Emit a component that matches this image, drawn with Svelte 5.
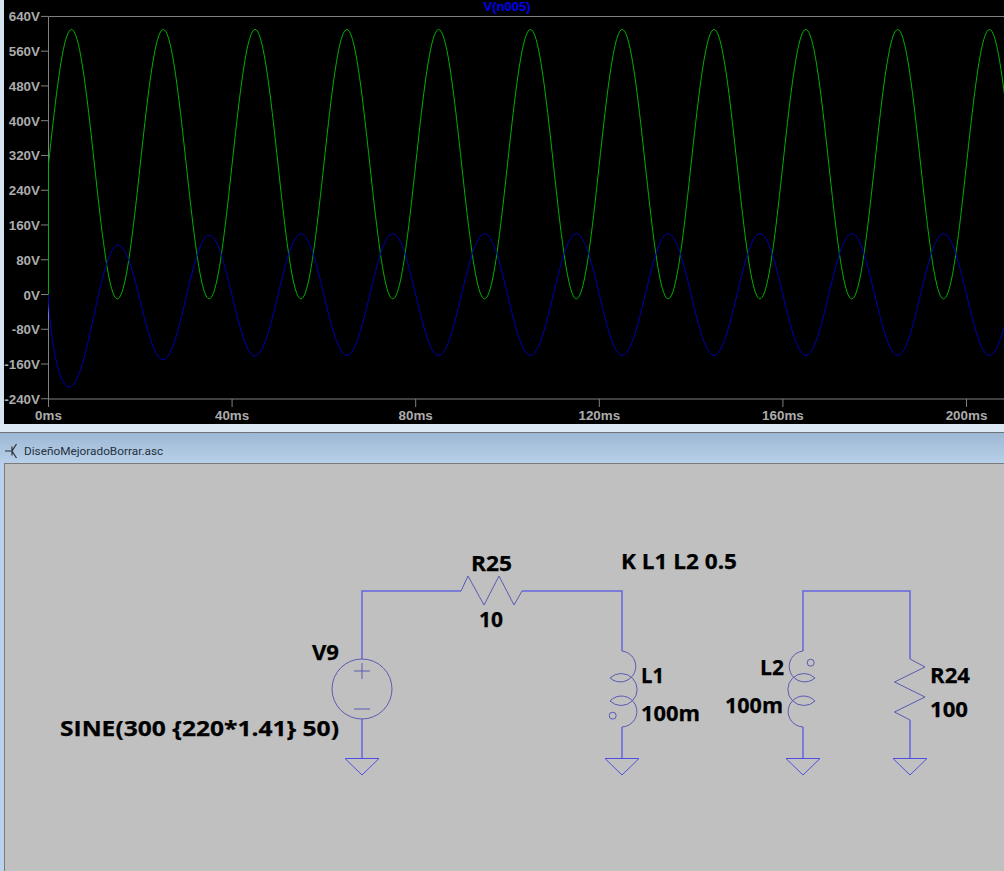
<script lang="ts">
	const xOf = (ms: number) => 48.5 + ms * 4.59;
	const yOf = (v: number) => 294.5 - v * 0.4345;

	const yTicks = [640, 560, 480, 400, 320, 240, 160, 80, 0, -80, -160, -240];
	const xTicks = [0, 40, 80, 120, 160, 200];

	const w = 2 * Math.PI * 0.05; // 50 Hz, t in ms

	function trace(fn: (t: number) => number, start: number) {
		const pts = [`${xOf(0)},${yOf(start)}`];
		for (let t = 0; t <= 210; t += 0.25) {
			pts.push(`${xOf(t).toFixed(2)},${yOf(fn(t)).toFixed(2)}`);
		}
		return pts.join(' ');
	}

	const green = trace((t) => 300 + 310 * Math.sin(w * t), 0);
	const blue = trace(
		(t) => -140 * Math.sin(w * t) - 119 * Math.exp(-t / 10) + 100 * Math.exp(-t),
		0
	);

	const grounds = [362, 622, 803, 910];

	// netlist labels: x, baseline, rendered width
	const labels = [
		{ text: 'R25', x: 471, y: 571, len: 41 },
		{ text: '10', x: 479, y: 627, len: 24 },
		{ text: 'K L1 L2 0.5', x: 621, y: 569, len: 116 },
		{ text: 'V9', x: 312, y: 660, len: 27 },
		{ text: 'SINE(300 {220*1.41} 50)', x: 60, y: 736, len: 279 },
		{ text: 'L1', x: 641, y: 683, len: 23 },
		{ text: '100m', x: 641, y: 721, len: 59 },
		{ text: 'L2', x: 760, y: 675, len: 24 },
		{ text: '100m', x: 725, y: 713, len: 58 },
		{ text: 'R24', x: 930, y: 683, len: 40 },
		{ text: '100', x: 930, y: 717, len: 38 }
	];
</script>

<div class="window">
	<div class="plot-pane">
		<svg class="plot" viewBox="4 0 1000 424" width="1000" height="424">
			<text class="trace-name" x="507" y="11">V(n005)</text>
			<path class="axis" d="M48.5 399V16.5H1004M48.5 399H1004" />
			{#each yTicks as v}
				<path class="axis" d="M41 {yOf(v)}H48.5" />
				<text class="y-label" x="40" y={yOf(v) + 5}>{v}V</text>
			{/each}
			{#each xTicks as ms}
				<path class="axis" d="M{xOf(ms)} 399V407" />
				<text class="x-label" x={xOf(ms)} y="420">{ms}ms</text>
			{/each}
			<polyline class="trace green" points={green} />
			<polyline class="trace blue" points={blue} />
		</svg>
	</div>

	<div class="doc">
		<div class="gap"></div>

		<div class="title-bar">
			<svg class="app-icon" viewBox="0 0 14 16" width="14" height="16">
				<path d="M0 8H7M7 3.5V12.5M7 8L11.5 1M7 8L11.5 15" />
			</svg>
			<span>DiseñoMejoradoBorrar.asc</span>
		</div>

		<div class="sheet-pane">
			<svg class="sheet" viewBox="5 464 999 407" width="999" height="407">
				<path class="wire" d="M362 659V591H461M522 591H622V651M622 727V758M362 719V758" />
				<path class="wire" d="M803 651V591H910V659M910 720V758M803 727V758" />

				<!-- V9 -->
				<circle class="part" cx="362" cy="689" r="30" />
				<path class="part" d="M354 671H370M362 663V679M354 709H370" />

				<!-- R25, R24 -->
				<path class="part" d="M461 591L468 576L484 605L499 576L514 605L522 591" />
				<path class="part" d="M910 659L925 667L894.5 682L925 697L894.5 712L910 720" />

				<!-- L1, L2 -->
				<path class="part" d="M622 651A15.5 15.5 0 1 1 610 678A16 16 0 1 1 610 701A15.5 15.5 0 1 1 622 727" />
				<path class="part" d="M803 651A15.5 15.5 0 1 0 815 678A16 16 0 1 0 815 701A15.5 15.5 0 1 0 803 727" />
				<circle class="part" cx="612.7" cy="715.7" r="3.5" />
				<circle class="part" cx="810.7" cy="662.7" r="3.5" />

				{#each grounds as x}
					<path class="gnd" d="M{x - 17} 758.5H{x + 17}L{x} 775Z" />
				{/each}

				{#each labels as l}
					<text class="label" x={l.x} y={l.y} textLength={l.len} lengthAdjust="spacingAndGlyphs">{l.text}</text>
				{/each}
			</svg>
		</div>
	</div>
</div>

<style>
	:global(body) {
		margin: 0;
		background: #d6e4f2;
	}

	.window {
		width: 1004px;
		height: 871px;
		display: flex;
		flex-direction: column;
		overflow: hidden;
		font-family: 'Liberation Sans', Arial, sans-serif;
	}

	.plot-pane {
		height: 424px;
		margin-left: 4px;
		background: #000;
	}

	svg {
		display: block;
	}

	.doc {
		flex: 1;
		display: flex;
		flex-direction: column;
		background: #b9d2ec;
	}

	.gap {
		height: 8px;
		background: #dce8f4;
		border-bottom: 1px solid #6f7377;
	}

	.title-bar {
		height: 30px;
		box-sizing: border-box;
		padding: 6px 0 0 5px;
		display: flex;
		align-items: center;
		gap: 5px;
		background: linear-gradient(#9db8d4, #b8d0e9);
		color: #26323f;
		font: 11.8px Roboto, sans-serif;
	}

	.app-icon {
		fill: none;
		stroke: #2a2f36;
		stroke-width: 1.2;
	}

	.sheet-pane {
		flex: 1;
		margin-left: 4px;
		border-top: 1px solid #7b7b7b;
		border-left: 1px solid #7b7b7b;
		background: #c0c0c0;
	}

	.trace-name {
		fill: #0000f0;
		font-size: 13px;
		font-weight: 700;
		text-anchor: middle;
	}

	.axis {
		fill: none;
		stroke: #808080;
		stroke-width: 1;
	}

	.y-label,
	.x-label {
		fill: #acacac;
		font-size: 13.4px;
		font-weight: 700;
	}

	.y-label {
		text-anchor: end;
	}

	.x-label {
		text-anchor: middle;
	}

	.trace {
		fill: none;
		stroke-width: 1;
	}

	.green {
		stroke: #00b000;
	}

	.blue {
		stroke: #0000b4;
	}

	.wire {
		fill: none;
		stroke: #6464e0;
		stroke-width: 1.5;
	}

	.part {
		fill: none;
		stroke: #5a5ab4;
		stroke-width: 1;
	}

	.gnd {
		fill: none;
		stroke: #5050e0;
		stroke-width: 1;
	}

	.label {
		fill: #000;
		stroke: #000;
		stroke-width: 0.25;
		font: 700 20.5px 'Open Sans', sans-serif;
	}
</style>
